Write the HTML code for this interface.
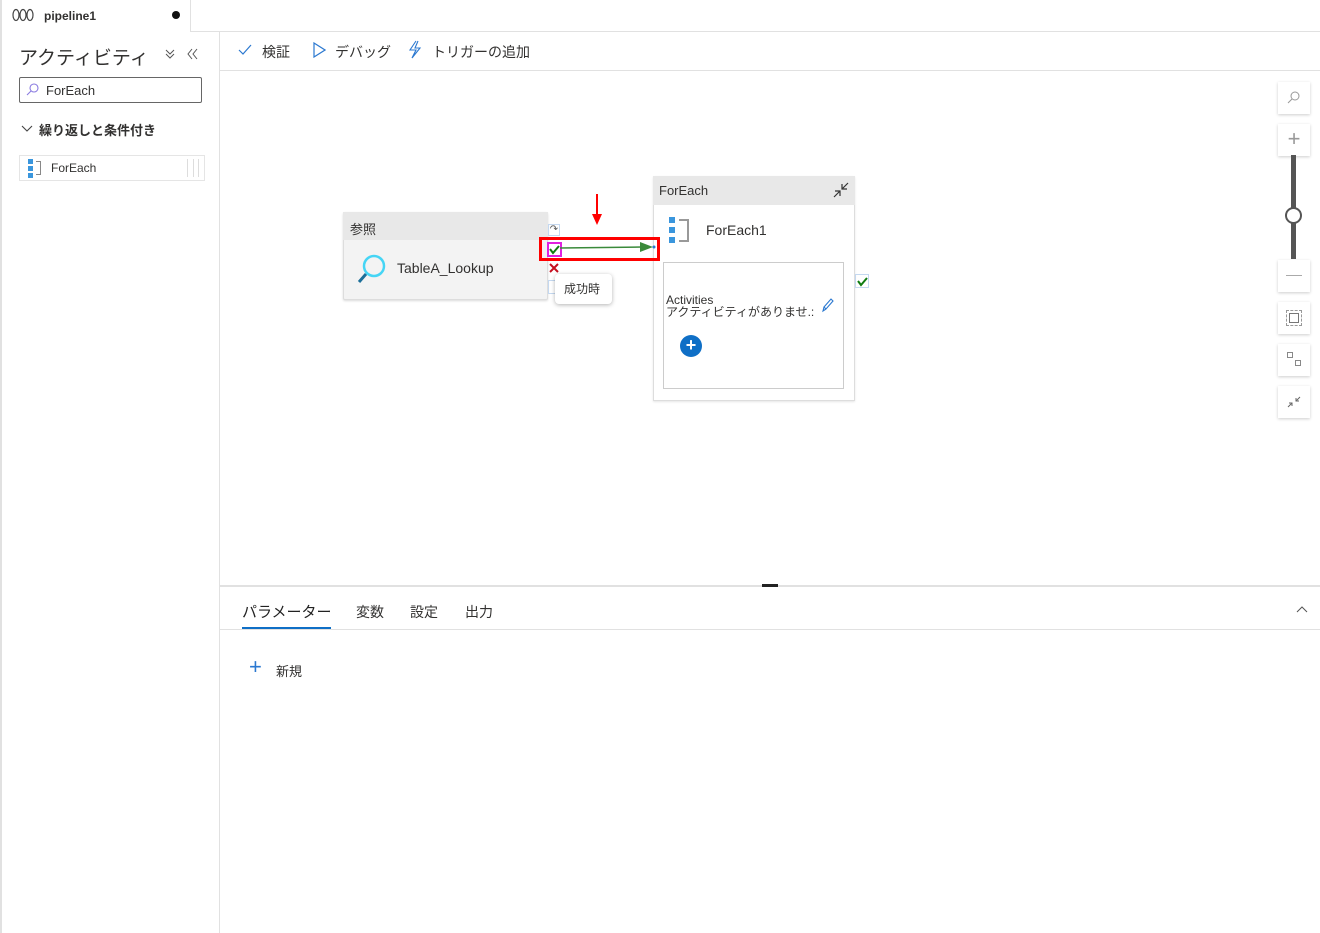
<!DOCTYPE html>
<html><head><meta charset="utf-8"><style>
*{box-sizing:border-box;margin:0;padding:0}
body{width:1320px;height:933px;position:relative;background:#fff;font-family:"Liberation Sans","Noto Sans CJK JP",sans-serif;color:#323130;overflow:hidden}
.a{position:absolute}
.zb{position:absolute;left:1278px;width:32px;height:32px;background:#fff;box-shadow:0 1px 3px rgba(0,0,0,.2)}
</style></head><body>
<div class="a" style="left:0;top:0;width:2px;height:933px;background:#e1e1e1"></div>
<div class="a" style="left:219px;top:32px;width:1px;height:901px;background:#e1e1e1"></div>
<div class="a" style="left:191px;top:31px;width:1129px;height:1px;background:#e1e1e1"></div>
<div class="a" style="left:190px;top:0;width:1px;height:32px;background:#e1e1e1"></div>
<svg class="a" style="left:12px;top:8px" width="22" height="14"><g fill="none" stroke="#444" stroke-width="1.2"><ellipse cx="4" cy="7" rx="3" ry="5.5"/><ellipse cx="11" cy="7" rx="3" ry="5.5"/><ellipse cx="18" cy="7" rx="3" ry="5.5"/></g></svg>
<div class="a" style="left:44px;top:9px;font-size:12px;font-weight:bold">pipeline1</div>
<div class="a" style="left:172px;top:11px;width:8px;height:8px;border-radius:50%;background:#111"></div>
<div class="a" style="left:19px;top:43px;font-size:19px;color:#323130">アクティビティ</div>
<svg class="a" style="left:165px;top:49px" width="10" height="10"><polyline points="1,1 5,5 9,1" fill="none" stroke="#555"/><polyline points="1,5 5,9 9,5" fill="none" stroke="#555"/></svg>
<svg class="a" style="left:186px;top:48px" width="12" height="12"><polyline points="6,1 2,6 6,11" fill="none" stroke="#555"/><polyline points="11,1 7,6 11,11" fill="none" stroke="#555"/></svg>
<div class="a" style="left:19px;top:77px;width:183px;height:26px;border:1px solid #666;border-radius:2px"></div>
<svg class="a" style="left:26px;top:83px" width="13" height="13"><circle cx="8" cy="5" r="4" fill="none" stroke="#8a7be0" stroke-width="1.1"/><line x1="5" y1="8" x2="1" y2="12" stroke="#8a7be0" stroke-width="1.1"/></svg>
<div class="a" style="left:46px;top:83px;font-size:13px">ForEach</div>
<svg class="a" style="left:21px;top:124px" width="12" height="10"><polyline points="1,2 6,7 11,2" fill="none" stroke="#444" stroke-width="1.1"/></svg>
<div class="a" style="left:39px;top:120px;font-size:13px;font-weight:bold">繰り返しと条件付き</div>
<div class="a" style="left:19px;top:155px;width:186px;height:26px;border:1px solid #e5e5e5"></div>
<div class="a" style="left:28px;top:159px;width:5px;height:5px;background:#3a96dd"></div>
<div class="a" style="left:28px;top:166px;width:5px;height:5px;background:#3a96dd"></div>
<div class="a" style="left:28px;top:173px;width:5px;height:5px;background:#3a96dd"></div>
<div class="a" style="left:36px;top:161px;width:5px;height:14px;border:1px solid #888;border-left:none"></div>
<div class="a" style="left:51px;top:161px;font-size:12px">ForEach</div>
<div class="a" style="left:187px;top:159px;width:12px;height:18px;border-left:1px solid #ddd;border-right:1px solid #ddd"></div>
<div class="a" style="left:193px;top:159px;width:1px;height:18px;background:#ddd"></div>
<div class="a" style="left:220px;top:70px;width:1100px;height:1px;background:#e1e1e1"></div>
<svg class="a" style="left:238px;top:44px" width="14" height="12"><polyline points="1,6 5,10 13,1" fill="none" stroke="#2b78d0" stroke-width="1.2"/></svg>
<div class="a" style="left:262px;top:42px;font-size:14px">検証</div>
<svg class="a" style="left:312px;top:42px" width="14" height="16"><polygon points="2,1 13,8 2,15" fill="none" stroke="#2b78d0" stroke-width="1.2"/></svg>
<div class="a" style="left:335px;top:42px;font-size:14px">デバッグ</div>
<svg class="a" style="left:407px;top:40px" width="18" height="20"><polyline points="9,1 3,10 9,10 5,18 13,8 8,8 11,1" fill="none" stroke="#2b78d0" stroke-width="1.1"/></svg>
<div class="a" style="left:432px;top:42px;font-size:14px">トリガーの追加</div>
<div class="a" style="left:343px;top:212px;width:205px;height:88px;background:#f3f3f3;border:1px solid #ddd;border-radius:2px;box-shadow:0 1px 2px rgba(0,0,0,.15)"></div>
<div class="a" style="left:343px;top:212px;width:205px;height:28px;background:#e8e8e8"></div>
<div class="a" style="left:350px;top:219px;font-size:13px">参照</div>
<svg class="a" style="left:356px;top:253px" width="32" height="32"><circle cx="18" cy="13" r="10" fill="none" stroke="#45d5f5" stroke-width="2.5"/><line x1="10" y1="21" x2="3" y2="29" stroke="#1c6f99" stroke-width="3"/></svg>
<div class="a" style="left:397px;top:260px;font-size:14px">TableA_Lookup</div>
<div class="a" style="left:548px;top:224px;width:12px;height:12px;border:1px solid #c4d8f0;font-size:10px;line-height:10px;text-align:center;color:#555">↷</div>
<svg class="a" style="left:548px;top:262px" width="12" height="12"><path d="M2 2L10 10M10 2L2 10" stroke="#c50f1f" stroke-width="2"/></svg>
<div class="a" style="left:548px;top:280px;width:8px;height:14px;border:1px solid #c4d8f0"></div>
<div class="a" style="left:555px;top:274px;width:57px;height:30px;background:#fff;border-radius:4px;box-shadow:0 1px 4px rgba(0,0,0,.3);font-size:12px;padding:6px 0 0 9px">成功時</div>
<div class="a" style="left:653px;top:176px;width:202px;height:225px;background:#fff;border:1px solid #ddd;box-shadow:0 1px 2px rgba(0,0,0,.1)"></div>
<div class="a" style="left:653px;top:176px;width:202px;height:29px;background:#e8e8e8"></div>
<div class="a" style="left:659px;top:183px;font-size:13px">ForEach</div>
<svg class="a" style="left:832px;top:181px" width="18" height="18"><path d="M2 16L8 10M3 10H8V15M16 2L10 8M15 8H10V3" fill="none" stroke="#333" stroke-width="1.2"/></svg>
<div class="a" style="left:669px;top:217px;width:6px;height:6px;background:#3a96dd"></div>
<div class="a" style="left:669px;top:227px;width:6px;height:6px;background:#3a96dd"></div>
<div class="a" style="left:669px;top:237px;width:6px;height:6px;background:#3a96dd"></div>
<div class="a" style="left:679px;top:219px;width:10px;height:23px;border:2px solid #999;border-left:none"></div>
<div class="a" style="left:706px;top:222px;font-size:14px">ForEach1</div>
<div class="a" style="left:663px;top:262px;width:181px;height:127px;border:1px solid #ccc"></div>
<div class="a" style="left:666px;top:294px;font-size:12px;line-height:12px">Activities<br>アクティビティがありませ.:</div>
<svg class="a" style="left:820px;top:297px" width="14" height="16"><path d="M4 10L11 2L13 4L6 12Z M4 10L3 14L6 12" fill="none" stroke="#2b78d0" stroke-width="1.1"/></svg>
<div class="a" style="left:680px;top:335px;width:22px;height:22px;border-radius:50%;background:#0f6fc6;color:#fff;font-size:18px;font-weight:bold;line-height:21px;text-align:center">+</div>
<div class="a" style="left:855px;top:274px;width:14px;height:14px;border:1px solid #c4d8f0"></div>
<svg class="a" style="left:857px;top:276px" width="11" height="11"><polyline points="1,5 4,9 10,2" fill="none" stroke="#107c10" stroke-width="2"/></svg>
<!-- red box on top -->
<div class="a" style="left:539px;top:237px;width:121px;height:24px;border:3px solid #ff0000"></div>
<div class="a" style="left:547px;top:242px;width:15px;height:15px;border:2px solid #e020e0;background:#fff"></div>
<svg class="a" style="left:549px;top:244px" width="11" height="11"><polyline points="1,5 4,9 10,2" fill="none" stroke="#107c10" stroke-width="2"/></svg>
<svg class="a" style="left:560px;top:240px" width="100" height="16"><line x1="0" y1="8" x2="82" y2="7" stroke="#3a8a3a" stroke-width="1.5"/><polygon points="80,2 93,7 80,12" fill="#3a8a3a"/><circle cx="94" cy="7" r="1.5" fill="#2b78d0"/></svg>
<svg class="a" style="left:591px;top:194px" width="12" height="34"><line x1="6" y1="0" x2="6" y2="24" stroke="#ff0000" stroke-width="2"/><polygon points="1,20 11,20 6,31" fill="#ff0000"/></svg>
<div class="zb" style="top:82px"></div>
<svg class="a" style="left:1287px;top:90px" width="14" height="14"><circle cx="8" cy="6" r="4" fill="none" stroke="#999"/><line x1="5" y1="9" x2="1" y2="13" stroke="#999"/></svg>
<div class="zb" style="top:124px"></div>
<div class="a" style="left:1285px;top:124px;width:18px;font-size:22px;color:#999;text-align:center;line-height:30px">+</div>
<div class="a" style="left:1291px;top:155px;width:5px;height:104px;background:#555"></div>
<div class="a" style="left:1285px;top:207px;width:17px;height:17px;border-radius:50%;background:#fff;border:2px solid #555"></div>
<div class="zb" style="top:260px"></div>
<div class="a" style="left:1286px;top:275px;width:16px;height:1px;background:#aaa"></div>
<div class="zb" style="top:302px"></div>
<div class="a" style="left:1286px;top:310px;width:16px;height:16px;border:1px dashed #999"></div>
<div class="a" style="left:1289px;top:313px;width:10px;height:10px;border:1px solid #777"></div>
<div class="zb" style="top:344px"></div>
<div class="a" style="left:1287px;top:352px;width:6px;height:6px;border:1px solid #888"></div>
<div class="a" style="left:1295px;top:360px;width:6px;height:6px;border:1px solid #888"></div>
<div class="zb" style="top:386px"></div>
<svg class="a" style="left:1286px;top:395px" width="16" height="14"><path d="M2 12L6 8M3 8H6V11M14 2L10 6M13 6H10V3" fill="none" stroke="#666"/></svg>
<div class="a" style="left:220px;top:585px;width:1100px;height:2px;background:#e1e1e1"></div>
<div class="a" style="left:762px;top:584px;width:16px;height:3px;background:#222"></div>
<div class="a" style="left:242px;top:601px;font-size:15px;color:#222">パラメーター</div>
<div class="a" style="left:356px;top:602px;font-size:14px">変数</div>
<div class="a" style="left:410px;top:602px;font-size:14px">設定</div>
<div class="a" style="left:465px;top:602px;font-size:14px">出力</div>
<div class="a" style="left:242px;top:627px;width:89px;height:2px;background:#0f6fc6"></div>
<div class="a" style="left:220px;top:629px;width:1100px;height:1px;background:#e1e1e1"></div>
<svg class="a" style="left:1296px;top:605px" width="12" height="8"><polyline points="1,7 6,2 11,7" fill="none" stroke="#555"/></svg>
<div class="a" style="left:249px;top:654px;font-size:22px;color:#2b78d0;font-weight:300;line-height:26px">+</div>
<div class="a" style="left:276px;top:661px;font-size:13px">新規</div>
</body></html>
